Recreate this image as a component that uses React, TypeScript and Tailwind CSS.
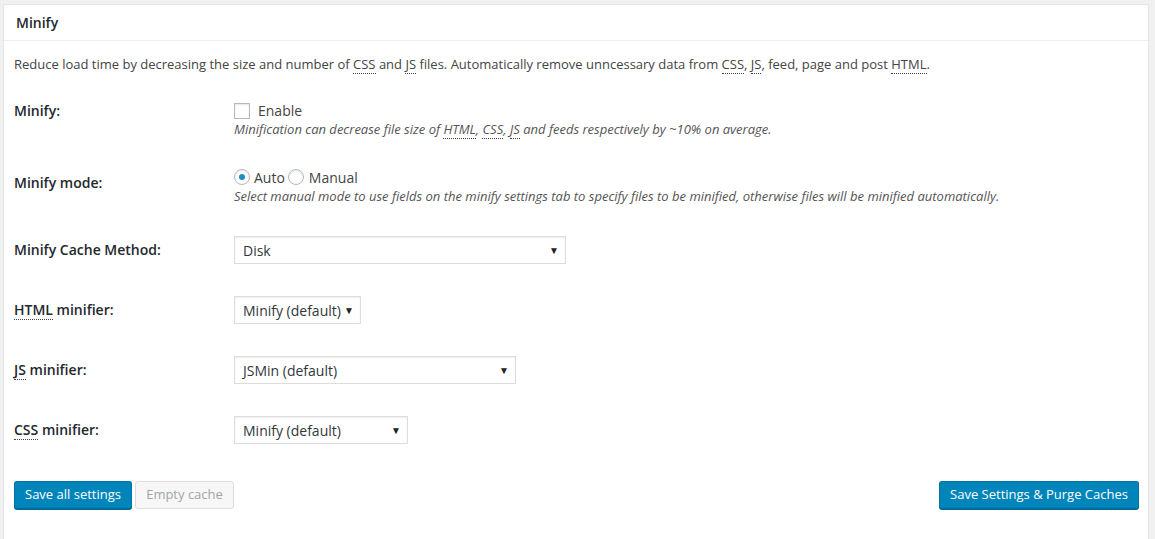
import React from "react";

const Abbr = ({ children }: { children: React.ReactNode }) => (
  <span className="border-b border-dotted border-[#444]">{children}</span>
);

const Select = ({ value, width }: { value: string; width: string }) => (
  <div
    className={`${width} h-[28px] flex items-center justify-between pl-[8px] pr-[6px] bg-white border border-[#ddd] shadow-[inset_0_1px_2px_rgba(0,0,0,0.07)] text-[14px] text-[#32373c]`}
  >
    <span>{value}</span>
    <span className="text-[10px] text-[#222] leading-none">▼</span>
  </div>
);

const Row = ({
  label,
  children,
  className = "",
}: {
  label: React.ReactNode;
  children: React.ReactNode;
  className?: string;
}) => (
  <div className={`flex ${className}`}>
    <div className="w-[220px] shrink-0 pt-[20px] text-[14px] leading-[18px] font-semibold text-[#23282d]">
      {label}
    </div>
    <div className="flex-1">{children}</div>
  </div>
);

export default function App() {
  return (
    <div className="min-h-screen bg-[#f1f1f1] pl-[3px] pt-[4px] pr-[6px] font-['Open_Sans',sans-serif] text-[#444]">
      <div className="bg-white border border-[#e5e5e5] shadow-[0_1px_1px_rgba(0,0,0,0.04)] min-h-[540px]">
        <div className="h-[36px] flex items-center px-[12px] border-b border-[#eee]">
          <h3 className="text-[14px] font-semibold text-[#23282d]">Minify</h3>
        </div>

        <div className="pl-[10px] pr-[9px]">
          <p className="pt-[13px] text-[13px] leading-[20px]">
            Reduce load time by decreasing the size and number of <Abbr>CSS</Abbr> and <Abbr>JS</Abbr> files.
            Automatically remove unncessary data from <Abbr>CSS</Abbr>, <Abbr>JS</Abbr>, feed, page and post{" "}
            <Abbr>HTML</Abbr>.
          </p>

          <div className="mt-[8px]">
            <Row label="Minify:" className="h-[72px]">
              <div className="pt-[15px]">
                <label className="h-[27px] flex items-center gap-[8px] text-[14px] text-[#444]">
                  <span className="w-[16px] h-[16px] border border-[#b4b9be] bg-white shadow-[inset_0_1px_2px_rgba(0,0,0,0.1)]" />
                  Enable
                </label>
                <p className="-mt-[4px] text-[13px] leading-[18px] italic text-[#555]">
                  Minification can decrease file size of <Abbr>HTML</Abbr>, <Abbr>CSS</Abbr>, <Abbr>JS</Abbr> and
                  feeds respectively by ~10% on average.
                </p>
              </div>
            </Row>

            <Row label="Minify mode:" className="h-[67px]">
              <div className="pt-[15px]">
                <div className="h-[16px] flex items-center text-[14px] text-[#444]">
                  <span className="w-[16px] h-[16px] rounded-full border border-[#b4b9be] bg-white shadow-[inset_0_1px_2px_rgba(0,0,0,0.1)] flex items-center justify-center">
                    <span className="w-[6px] h-[6px] rounded-full bg-[#1e8cbe]" />
                  </span>
                  <span className="ml-[4px]">Auto</span>
                  <span className="ml-[3px] w-[16px] h-[16px] rounded-full border border-[#b4b9be] bg-white shadow-[inset_0_1px_2px_rgba(0,0,0,0.1)]" />
                  <span className="ml-[5px]">Manual</span>
                </div>
                <p className="mt-[2px] text-[13px] leading-[18px] italic text-[#555]">
                  Select manual mode to use fields on the minify settings tab to specify files to be minified,
                  otherwise files will be minified automatically.
                </p>
              </div>
            </Row>

            <Row label="Minify Cache Method:" className="h-[60px]">
              <div className="pt-[15px]">
                <Select value="Disk" width="w-[332px]" />
              </div>
            </Row>

            <Row
              label={
                <>
                  <Abbr>HTML</Abbr> minifier:
                </>
              }
              className="h-[60px]"
            >
              <div className="pt-[15px]">
                <Select value="Minify (default)" width="w-[127px]" />
              </div>
            </Row>

            <Row
              label={
                <>
                  <Abbr>JS</Abbr> minifier:
                </>
              }
              className="h-[60px]"
            >
              <div className="pt-[15px]">
                <Select value="JSMin (default)" width="w-[282px]" />
              </div>
            </Row>

            <Row
              label={
                <>
                  <Abbr>CSS</Abbr> minifier:
                </>
              }
              className="h-[60px]"
            >
              <div className="pt-[15px]">
                <Select value="Minify (default)" width="w-[174px]" />
              </div>
            </Row>
          </div>

          <div className="mt-[20px] flex items-center justify-between">
            <div className="flex gap-[3px]">
              <button className="h-[28px] w-[118px] rounded-[3px] bg-[#0085ba] border border-[#0073aa] border-b-[#006799] shadow-[0_1px_0_#006799] text-white text-[13px]">
                Save all settings
              </button>
              <button className="h-[28px] w-[99px] rounded-[3px] bg-[#f7f7f7] border border-[#ddd] text-[#a0a5aa] text-[13px]">
                Empty cache
              </button>
            </div>
            <button className="h-[28px] w-[200px] rounded-[3px] bg-[#0085ba] border border-[#0073aa] border-b-[#006799] shadow-[0_1px_0_#006799] text-white text-[13px]">
              Save Settings &amp; Purge Caches
            </button>
          </div>
        </div>
      </div>
    </div>
  );
}
